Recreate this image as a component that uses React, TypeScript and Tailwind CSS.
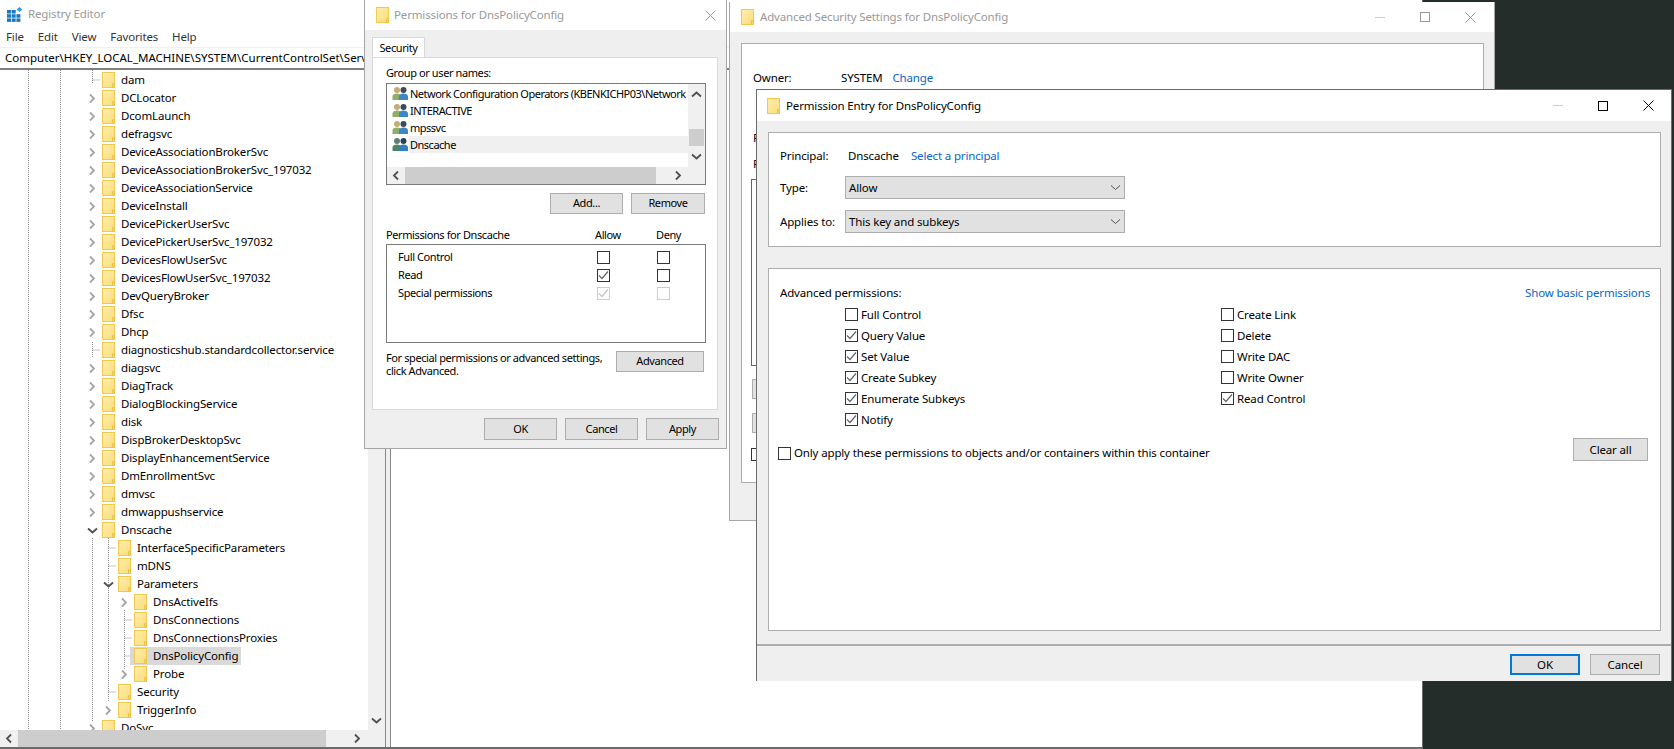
import React from "react"

type Row = { name: string; depth: 0 | 1 | 2; arrow?: "right" | "down"; selected?: boolean }

const rows: Row[] = [
  { name: "dam", depth: 0 },
  { name: "DCLocator", depth: 0, arrow: "right" },
  { name: "DcomLaunch", depth: 0, arrow: "right" },
  { name: "defragsvc", depth: 0, arrow: "right" },
  { name: "DeviceAssociationBrokerSvc", depth: 0, arrow: "right" },
  { name: "DeviceAssociationBrokerSvc_197032", depth: 0, arrow: "right" },
  { name: "DeviceAssociationService", depth: 0, arrow: "right" },
  { name: "DeviceInstall", depth: 0, arrow: "right" },
  { name: "DevicePickerUserSvc", depth: 0, arrow: "right" },
  { name: "DevicePickerUserSvc_197032", depth: 0, arrow: "right" },
  { name: "DevicesFlowUserSvc", depth: 0, arrow: "right" },
  { name: "DevicesFlowUserSvc_197032", depth: 0, arrow: "right" },
  { name: "DevQueryBroker", depth: 0, arrow: "right" },
  { name: "Dfsc", depth: 0, arrow: "right" },
  { name: "Dhcp", depth: 0, arrow: "right" },
  { name: "diagnosticshub.standardcollector.service", depth: 0 },
  { name: "diagsvc", depth: 0, arrow: "right" },
  { name: "DiagTrack", depth: 0, arrow: "right" },
  { name: "DialogBlockingService", depth: 0, arrow: "right" },
  { name: "disk", depth: 0, arrow: "right" },
  { name: "DispBrokerDesktopSvc", depth: 0, arrow: "right" },
  { name: "DisplayEnhancementService", depth: 0, arrow: "right" },
  { name: "DmEnrollmentSvc", depth: 0, arrow: "right" },
  { name: "dmvsc", depth: 0, arrow: "right" },
  { name: "dmwappushservice", depth: 0, arrow: "right" },
  { name: "Dnscache", depth: 0, arrow: "down" },
  { name: "InterfaceSpecificParameters", depth: 1 },
  { name: "mDNS", depth: 1 },
  { name: "Parameters", depth: 1, arrow: "down" },
  { name: "DnsActiveIfs", depth: 2, arrow: "right" },
  { name: "DnsConnections", depth: 2 },
  { name: "DnsConnectionsProxies", depth: 2 },
  { name: "DnsPolicyConfig", depth: 2, selected: true },
  { name: "Probe", depth: 2, arrow: "right" },
  { name: "Security", depth: 1 },
  { name: "TriggerInfo", depth: 1, arrow: "right" },
  { name: "DoSvc", depth: 0, arrow: "right" },
]

const indent = ["pl-[84px]", "pl-[100px]", "pl-[116px]"]

function Folder() {
  return (
    <svg width="13" height="16" viewBox="0 0 13 16" className="shrink-0">
      <defs>
        <linearGradient id="fold" x1="0" y1="0" x2="1" y2="1">
          <stop offset="0" stopColor="#ffeeb0" />
          <stop offset="1" stopColor="#fddc78" />
        </linearGradient>
      </defs>
      <rect x="0.5" y="0.5" width="12" height="15" fill="url(#fold)" stroke="#f0c94f" />
      <path d="M10.5 15.5V11.5H12.5V15.5Z" fill="#fbd561" stroke="#eec244" />
    </svg>
  )
}

function Chevron({ dir, dark, thin }: { dir: "right" | "down" | "left" | "up"; dark?: boolean; thin?: boolean }) {
  const d = {
    right: "M3 1.5 7 5.5 3 9.5",
    left: "M7 1.5 3 5.5 7 9.5",
    down: "M1 3.5 5.5 7.5 10 3.5",
    up: "M1 7.5 5.5 3.5 10 7.5",
  }[dir]
  return (
    <svg width="11" height="11" viewBox="0 0 11 11" className="shrink-0">
      <path d={d} fill="none" stroke={dark ? "#505050" : "#a6a6a6"} strokeWidth={thin ? 1 : 1.8} />
    </svg>
  )
}

function TreeRow({ row }: { row: Row }) {
  return (
    <div className={`flex items-center h-[18px] ${indent[row.depth]}`}>
      <span className="w-4 flex justify-center shrink-0">
        {row.arrow && <Chevron dir={row.arrow} dark={row.arrow === "down"} />}
      </span>
      <span className={`flex items-center h-full -ml-[2px] pl-1 pr-[3px] ${row.selected ? "bg-[#d9d9d9]" : ""}`}>
        <Folder />
        <span className="ml-[6px] whitespace-nowrap">{row.name}</span>
      </span>
    </div>
  )
}

function TreeLines() {
  const segs = [
    "M28.5 0V660", "M60.5 0V660",
    "M92.5 0V14", "M92.5 10H100", "M92.5 272V288", "M92.5 280H100", "M92.5 468V652",
    "M108.5 468V632", "M108.5 478H116", "M108.5 496H116", "M108.5 622H116",
    "M124.5 540V600", "M124.5 550H132", "M124.5 568H132", "M124.5 586H132",
  ]
  return (
    <svg className="absolute left-0 top-0" width="368" height="660">
      {segs.map((s) => (
        <path key={s} d={s} stroke="#8c8c8c" strokeDasharray="1 1" fill="none" />
      ))}
    </svg>
  )
}

function RegistryIcon() {
  return (
    <svg width="16" height="15" viewBox="0 0 16 15">
      <g fill="#1d78c1">
        <rect x="0" y="3" width="4" height="3.5" />
        <rect x="4.7" y="3" width="4" height="3.5" />
        <rect x="0" y="7.2" width="4" height="3.5" />
        <rect x="4.7" y="7.2" width="4" height="3.5" />
        <rect x="9.4" y="7.2" width="4" height="3.5" />
        <rect x="0" y="11.4" width="4" height="3.5" />
        <rect x="4.7" y="11.4" width="4" height="3.5" />
        <rect x="9.4" y="11.4" width="4" height="3.5" />
      </g>
      <path d="M12.5 0 15.5 2.5 12.5 5 9.5 2.5Z" fill="#3aa0dc" />
    </svg>
  )
}

function Users({ active }: { active?: boolean }) {
  return (
    <svg width="17" height="15" viewBox="0 0 17 15" className="shrink-0">
      <circle cx="5" cy="4" r="3" fill={active ? "#5f7f72" : "#c4ac72"} />
      <path d="M0.5 14V10.5C0.5 8.5 2.5 7.5 5 7.5S9 8.5 9 10.5V14Z" fill={active ? "#4e8468" : "#8fae68"} />
      <circle cx="11.5" cy="4" r="3" fill={active ? "#2f3f52" : "#3d4a58"} />
      <path d="M7 14V10.5C7 8.5 9 7.5 11.5 7.5S16 8.5 16 10.5V14Z" fill={active ? "#2f7fc4" : "#3f86c6"} />
    </svg>
  )
}

function Box({ checked, disabled }: { checked?: boolean; disabled?: boolean }) {
  return (
    <span className={`flex items-center justify-center w-[13px] h-[13px] border bg-white shrink-0 ${disabled ? "border-[#cccccc]" : "border-[#333333]"}`}>
      {checked && (
        <svg width="11" height="11" viewBox="0 0 11 11">
          <path d="M1 5.5 4 8.5 10 1.5" fill="none" stroke={disabled ? "#c4c4c4" : "#666666"} strokeWidth="1.2" />
        </svg>
      )}
    </span>
  )
}

function Btn({ label, className }: { label: string; className: string }) {
  return (
    <button className={`flex items-center justify-center shrink-0 bg-[#e1e1e1] border border-[#adadad] ${className}`}>
      {label}
    </button>
  )
}

function WinControls({ active, className }: { active?: boolean; className: string }) {
  const stroke = active ? "#000000" : "#999999"
  return (
    <div className={`flex items-center ${className}`}>
      <span className="w-[10px] h-px bg-[#cccccc]" />
      <span className={`ml-[35px] w-[10px] h-[10px] border ${active ? "border-black" : "border-[#999999]"}`} />
      <svg width="11" height="11" viewBox="0 0 11 11" className="ml-[35px]">
        <path d="M0.5 0.5 10.5 10.5M10.5 0.5 0.5 10.5" stroke={stroke} fill="none" />
      </svg>
    </div>
  )
}

function Perm({ label, checked }: { label: string; checked?: boolean }) {
  return (
    <div className="flex items-center h-[21px]">
      <Box checked={checked} />
      <span className="ml-[3px]">{label}</span>
    </div>
  )
}

function Registry() {
  return (
    <div className="absolute left-0 top-0 w-[1423px] h-[749px] flex flex-col bg-white border-r border-b-2 border-[#6b6b6b]">
      <div className="flex items-center h-[27px] pl-[7px] pt-px">
        <RegistryIcon />
        <span className="ml-[5px] text-[#999999]">Registry Editor</span>
      </div>
      <div className="flex items-center h-[20px] pl-[6px] text-[#333333]">
        <span>File</span>
        <span className="ml-[14px]">Edit</span>
        <span className="ml-[14px]">View</span>
        <span className="ml-[14px]">Favorites</span>
        <span className="ml-[14px]">Help</span>
      </div>
      <div className="flex items-center h-[23px] pl-[5px] border-t border-[#f0f0f0] border-b-2 border-b-[#7f7f7f] whitespace-nowrap overflow-hidden tracking-normal">
        Computer\HKEY_LOCAL_MACHINE\SYSTEM\CurrentControlSet\Services\Dnscache\Parameters\DnsPolicyConfig
      </div>
      <div className="flex flex-1 min-h-0">
        <div className="flex flex-col w-[385px]">
          <div className="flex flex-1 min-h-0">
            <div className="relative w-[368px] overflow-hidden">
              <TreeLines />
              <div className="relative pt-px">
                {rows.map((r) => (
                  <TreeRow key={r.name} row={r} />
                ))}
              </div>
            </div>
            <div className="flex flex-col justify-end items-center w-[17px] bg-[#f0f0f0] pb-[4px]">
              <Chevron dir="down" dark />
            </div>
          </div>
          <div className="flex items-center h-[17px] bg-[#f0f0f0]">
            <span className="w-[18px] flex justify-center"><Chevron dir="left" dark /></span>
            <span className="w-[308px] h-full bg-[#cdcdcd]" />
            <span className="ml-[26px]"><Chevron dir="right" dark /></span>
          </div>
        </div>
        <div className="w-[6px] bg-[#efefef] border-x border-[#85888c]" />
        <div className="flex-1 bg-white" />
      </div>
    </div>
  )
}

function Permissions() {
  return (
    <div className="absolute left-[364px] top-0 w-[363px] h-[449px] flex flex-col bg-[#efefef] border-x border-b border-[#a6a6a6]">
      <div className="flex items-center h-[30px] bg-white pl-[11px] pr-[10px]">
        <Folder />
        <span className="ml-[5px] text-[#999999] flex-1">Permissions for DnsPolicyConfig</span>
        <svg width="11" height="11" viewBox="0 0 11 11">
          <path d="M0.5 0.5 10.5 10.5M10.5 0.5 0.5 10.5" stroke="#999999" fill="none" />
        </svg>
      </div>
      <div className="text-[11px] tracking-[-0.4px]">
        <div className="pl-[7px] pt-[7px]">
          <div className="flex items-center justify-center w-[53px] h-[21px] bg-white border border-b-0 border-[#d9d9d9]">Security</div>
          <div className="w-[346px] h-[353px] bg-white border border-[#d9d9d9] -mt-px px-[13px]">
            <div className="h-[16px] mt-[7px] flex items-center">Group or user names:</div>
            <div className="flex flex-col w-[320px] h-[102px] mt-[2px] border border-[#7a7a7a]">
              <div className="flex flex-1 min-h-0">
                <div className="flex-1 min-w-0 pt-px pl-[5px] tracking-[-0.5px]">
                  {[
                    "Network Configuration Operators (KBENKICHP03\\Network",
                    "INTERACTIVE",
                    "mpssvc",
                    "Dnscache",
                  ].map((n, i) => (
                    <div key={n} className="flex items-center h-[17px] whitespace-nowrap overflow-hidden">
                      <Users active={i === 3} />
                      <span className={`flex-1 pl-px leading-[17px] ${i === 3 ? "bg-[#f0f0f0]" : ""}`}>{n}</span>
                    </div>
                  ))}
                </div>
                <div className="flex flex-col items-center justify-between shrink-0 w-[17px] py-[5px] bg-[#f0f0f0]">
                  <Chevron dir="up" dark />
                  <span className="w-[15px] h-[17px] bg-[#cdcdcd] mt-[24px]" />
                  <Chevron dir="down" dark />
                </div>
              </div>
              <div className="flex items-center h-[17px] bg-[#f0f0f0]">
                <span className="w-[18px] flex justify-center"><Chevron dir="left" dark /></span>
                <span className="w-[251px] h-full bg-[#cdcdcd]" />
                <span className="ml-[17px]"><Chevron dir="right" dark /></span>
              </div>
            </div>
            <div className="flex justify-end gap-2 mt-2 -mr-px">
              <Btn label="Add..." className="w-[73px] h-[21px]" />
              <Btn label="Remove" className="w-[74px] h-[21px]" />
            </div>
            <div className="grid grid-cols-[209px_61px_auto] h-[16px] mt-[13px] items-center">
              <span>Permissions for Dnscache</span>
              <span>Allow</span>
              <span>Deny</span>
            </div>
            <div className="w-[320px] h-[99px] mt-[1px] border border-[#7a7a7a] pt-[3px] pl-[11px]">
              {[
                { n: "Full Control" },
                { n: "Read", a: true },
                { n: "Special permissions", a: true, dim: true },
              ].map((p) => (
                <div key={p.n} className="grid grid-cols-[199px_60px_auto] items-center h-[18px]">
                  <span>{p.n}</span>
                  <Box checked={p.a} disabled={p.dim} />
                  <Box disabled={p.dim} />
                </div>
              ))}
            </div>
            <div className="flex mt-[8px] justify-between">
              <div className="leading-[13px] whitespace-nowrap">
                For special permissions or advanced settings,
                <br />
                click Advanced.
              </div>
              <Btn label="Advanced" className="w-[88px] h-[21px]" />
            </div>
          </div>
        </div>
        <div className="flex justify-end gap-2 mt-[8px] pr-[7px]">
          <Btn label="OK" className="w-[73px] h-[22px]" />
          <Btn label="Cancel" className="w-[73px] h-[22px]" />
          <Btn label="Apply" className="w-[73px] h-[22px]" />
        </div>
      </div>
    </div>
  )
}

function AdvancedSettings() {
  return (
    <div className="absolute left-[729px] top-[2px] w-[766px] h-[519px] flex flex-col bg-[#efefef] border-x border-b border-[#a6a6a6]">
      <div className="flex items-center h-[30px] bg-white pl-[11px]">
        <Folder />
        <span className="ml-[6px] text-[#999999] flex-1">Advanced Security Settings for DnsPolicyConfig</span>
        <WinControls className="mr-[18px]" />
      </div>
      <div className="ml-[11px] mt-[11px] w-[743px] h-[440px] bg-white border border-[#adadad] pl-[11px]">
        <div className="flex items-center h-[16px] mt-[26px]">
          <span className="w-[88px]">Owner:</span>
          <span>SYSTEM</span>
          <span className="ml-[10px] text-[#0a64c8]">Change</span>
        </div>
        <div className="mt-[44px] h-[16px] leading-[16px]">P</div>
        <div className="mt-[10px] h-[16px] leading-[16px]">P</div>
        <div className="-ml-[2px] mt-[7px] w-[40px] h-[187px] border border-[#666666]" />
        <div className="-ml-[1px] mt-[13px] w-[40px] h-[20px] bg-[#e1e1e1] border border-[#adadad]" />
        <div className="-ml-[1px] mt-[14px] w-[40px] h-[20px] bg-[#e1e1e1] border border-[#adadad]" />
        <div className="-ml-[2px] mt-[15px] w-[13px] h-[13px] border border-[#333333]" />
      </div>
    </div>
  )
}

function PermissionEntry() {
  return (
    <div className="absolute left-[756px] top-[89px] w-[916px] h-[592px] flex flex-col bg-[#efefef] border-l border-t border-r border-[#6b6b6b]">
      <div className="flex items-center h-[31px] bg-white pl-[10px]">
        <Folder />
        <span className="ml-[6px] flex-1">Permission Entry for DnsPolicyConfig</span>
        <WinControls active className="mr-[17px]" />
      </div>
      <div className="ml-[11px] mt-[11px] w-[893px] h-[115px] bg-white border border-[#adadad] pl-[11px]">
        <div className="flex items-center h-[16px] mt-[15px]">
          <span className="w-[68px]">Principal:</span>
          <span>Dnscache</span>
          <span className="ml-[12px] text-[#0a64c8]">Select a principal</span>
        </div>
        <div className="flex items-center mt-[12px]">
          <span className="w-[65px]">Type:</span>
          <div className="flex items-center justify-between w-[280px] h-[23px] pl-[3px] pr-[3px] bg-[#e1e1e1] border border-[#adadad]">
            <span>Allow</span>
            <Chevron dir="down" dark thin />
          </div>
        </div>
        <div className="flex items-center mt-[11px]">
          <span className="w-[65px]">Applies to:</span>
          <div className="flex items-center justify-between w-[280px] h-[23px] pl-[3px] pr-[3px] bg-[#e1e1e1] border border-[#adadad]">
            <span>This key and subkeys</span>
            <Chevron dir="down" dark thin />
          </div>
        </div>
      </div>
      <div className="ml-[11px] mt-[21px] w-[893px] h-[363px] bg-white border border-[#adadad] pl-[11px] pr-[10px]">
        <div className="flex items-center justify-between h-[16px] mt-[16px]">
          <span>Advanced permissions:</span>
          <span className="text-[#0a64c8]">Show basic permissions</span>
        </div>
        <div className="grid grid-cols-[376px_auto] ml-[65px] mt-[3px]">
          <div>
            <Perm label="Full Control" />
            <Perm label="Query Value" checked />
            <Perm label="Set Value" checked />
            <Perm label="Create Subkey" checked />
            <Perm label="Enumerate Subkeys" checked />
            <Perm label="Notify" checked />
          </div>
          <div>
            <Perm label="Create Link" />
            <Perm label="Delete" />
            <Perm label="Write DAC" />
            <Perm label="Write Owner" />
            <Perm label="Read Control" checked />
          </div>
        </div>
        <div className="flex items-start justify-between -ml-[2px] mt-[8px] mr-[2px]">
          <div className="flex items-center h-[16px] mt-[7px]">
            <Box />
            <span className="ml-[3px]">Only apply these permissions to objects and/or containers within this container</span>
          </div>
          <Btn label="Clear all" className="w-[75px] h-[23px]" />
        </div>
      </div>
      <div className="mt-[13px] h-[2px] bg-[#adadad]" />
      <div className="flex justify-end gap-[10px] mt-[8px] pr-[11px]">
        <button className="flex items-center justify-center w-[70px] h-[21px] bg-[#e1e1e1] border-2 border-[#0078d7]">OK</button>
        <button className="flex items-center justify-center w-[70px] h-[21px] bg-[#e1e1e1] border border-[#adadad]">Cancel</button>
      </div>
    </div>
  )
}

export default function App() {
  return (
    <div className="relative w-[1674px] h-[749px] overflow-hidden bg-[#252d2a] text-black text-[11.5px] tracking-[-0.15px] font-['Noto_Sans',sans-serif]">
      <div className="absolute left-0 top-0 w-[1423px] h-[2px] bg-[#a6a6a6]" />
      <Registry />
      <Permissions />
      <AdvancedSettings />
      <PermissionEntry />
    </div>
  )
}
